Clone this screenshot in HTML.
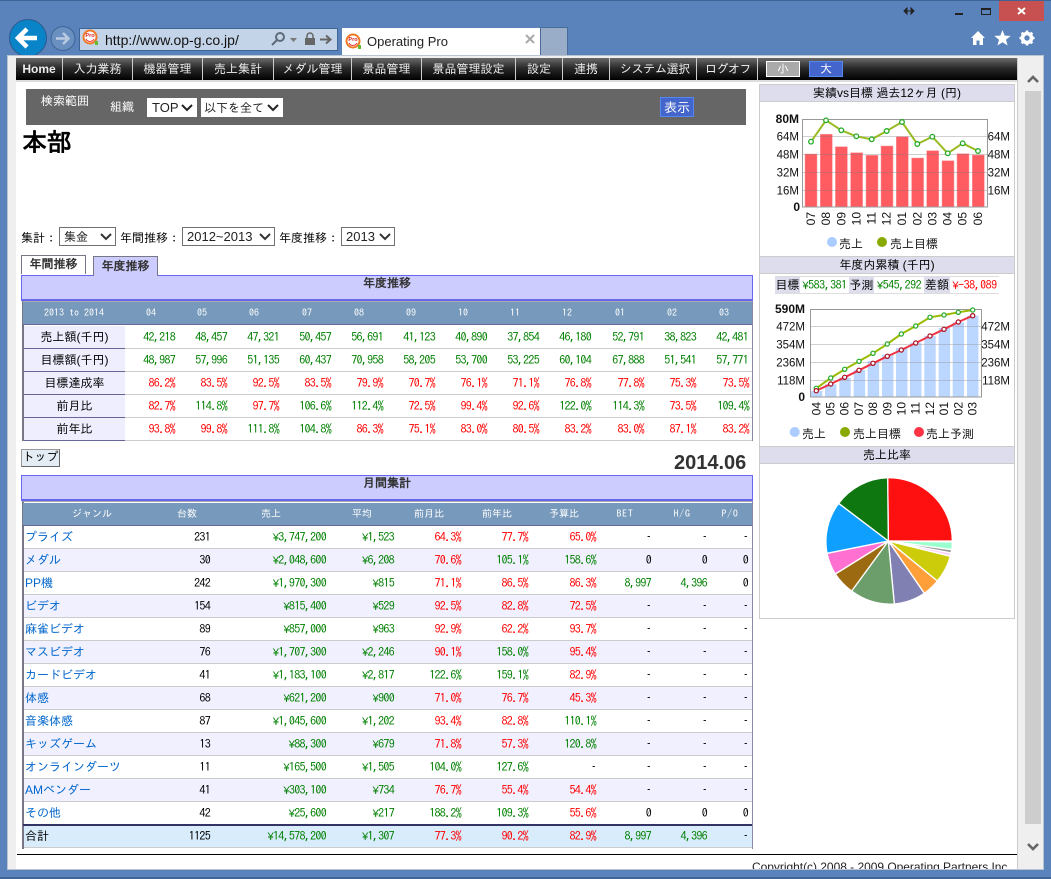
<!DOCTYPE html>
<html lang="ja"><head><meta charset="utf-8"><title>Operating Pro</title>
<style>
*{box-sizing:border-box}
html,body{margin:0;padding:0;background:#5b83bb;overflow:hidden}
#w{position:relative;width:1051px;height:879px;overflow:hidden;background:#5b83bb;font-family:"Liberation Sans","IPAGothic","Noto Sans CJK JP",sans-serif;font-size:12px;color:#000}
.a{position:absolute;white-space:nowrap}
.nav{position:absolute;top:58px;height:22px;line-height:22px;color:#eee;font-size:12px;text-align:center;border-right:1px solid #ccc}
table{position:absolute;border-collapse:separate;border-spacing:0;table-layout:fixed;font-family:"IPAGothic","Liberation Sans",sans-serif;font-size:12px}
td{height:23px;padding:0;text-align:right;border-bottom:1px solid #ccc;white-space:nowrap;overflow:visible;letter-spacing:-.7px}
td.n{font-family:"Liberation Sans","IPAGothic",sans-serif;font-size:12px;letter-spacing:0}
i{font-style:normal;font-family:"Liberation Sans",sans-serif;font-size:11px}
.t1 td.n{text-align:center;background:#eef;border-bottom-color:#669}
.t2 td.n{text-align:left;padding-left:1px;color:#06c}
.alt td{background:#f0f0ff}
.tot td{background:#d8ecfc;height:23px;border-top:0}
.g{color:#008000}.r{color:#f00}
.hd{position:absolute;background:#79b;height:23px;border-bottom:1px solid #669;font-family:"IPAGothic",sans-serif}
.hd span{position:absolute;top:6px;color:#fff;font-size:10px;transform:translateX(-50%);white-space:nowrap}
.hd span.l{letter-spacing:.7px}
.bar{position:absolute;left:21px;width:732px;height:26px;background:#ccf;border:1px solid #66e;border-bottom-width:2px;text-align:center;font-weight:bold;color:#333;font-size:12px;line-height:15px}
.sel{position:absolute;height:19px;background:#fff;border:1px solid #707070}
.sel select{appearance:none;-webkit-appearance:none;border:0;background:transparent;width:100%;height:100%;padding:0 0 0 4px;font:13px "Liberation Sans","IPAGothic",sans-serif;color:#222;outline:0}
.sel svg{position:absolute;right:3px;top:5px}
.ph{position:absolute;left:760px;width:254px;background:#dde;text-align:center;font-size:12px;line-height:17px;border-bottom:1px solid #ccc;border-top:1px solid #ccc}
.v{position:absolute;top:276px;height:18px;line-height:17px;font-size:12px;text-align:center;border-top:1px solid #ddd;border-bottom:1px solid #ddd;font-family:"IPAGothic",sans-serif;white-space:nowrap}
.v.g,.v.r{letter-spacing:-.5px}
svg text{font-family:"Liberation Sans",sans-serif}
</style></head><body><div id="w">

<!-- window chrome -->
<div class="a" style="left:0;top:0;width:1051px;height:1px;background:#3f6496"></div>
<div class="a" style="left:999px;top:1px;width:45px;height:20px;background:#c75050"></div>
<svg class="a" style="left:0;top:0" width="1051" height="60">
 <path d="M904 11h10M904 11l3-3v6zM914 11l-3-3v6z" fill="#222" stroke="#222"/>
 <rect x="955" y="13" width="8" height="2" fill="#222"/>
 <rect x="981.5" y="8.5" width="9" height="6" fill="none" stroke="#222"/><rect x="981" y="8" width="10" height="2" fill="#222"/>
 <path d="M1018 8l7 6M1025 8l-7 6" stroke="#fff" stroke-width="2"/>
 <circle cx="28" cy="38" r="18.5" fill="#0a84c8" stroke="#2d5a8e" stroke-width="1"/>
 <path d="M19 38h18M27 29l-9 9 9 9" fill="none" stroke="#fff" stroke-width="4.5"/>
 <circle cx="63" cy="38.500" r="12" fill="#6a90c2" stroke="#3f6496" stroke-width="1"/>
 <path d="M56 38.500h12M63 33l5.500 5.500-5.500 5.500" fill="none" stroke="#b9cbe2" stroke-width="2.400"/>
 <rect x="79.500" y="28.500" width="258" height="22" fill="#c4d4e8" stroke="#3f6496"/>
 <g fill="none" stroke="#5f6b7a" stroke-width="2"><circle cx="280" cy="37" r="4"/><path d="M277 40l-5 5"/></g>
 <path d="M290 38h7l-3.500 4z" fill="#777"/>
 <rect x="305" y="38" width="10" height="7" fill="#666"/><path d="M307 38v-2a3 3 0 0 1 6 0v2" fill="none" stroke="#666" stroke-width="1.500"/>
 <path d="M320 39.500h10M326 35.500l4.500 4-4.500 4" fill="none" stroke="#666" stroke-width="2"/>
 <rect x="342" y="28" width="198" height="27" fill="#fff"/>
 <rect x="540.500" y="27.500" width="27" height="28" fill="#9aadc8" stroke="#4a6c9c"/>
 <path d="M526 35l8 8M534 35l-8 8" stroke="#aaa" stroke-width="2"/>
 <g id="fav"><circle cx="90" cy="37" r="6.500" fill="#fff" stroke="#ef7a25" stroke-width="2"/><text x="90" y="37" font-size="5.500" font-weight="bold" fill="#d22" text-anchor="middle">Pro</text><path d="M86 39a4.500 4.500 0 0 0 8 0" fill="none" stroke="#e33"/><rect x="95" y="41" width="3" height="4" fill="#6b3"/></g>
 <circle cx="353" cy="41" r="6.500" fill="#fff" stroke="#ef7a25" stroke-width="2"/><text x="353" y="41" font-size="5.500" font-weight="bold" fill="#d22" text-anchor="middle">Pro</text><path d="M349 43a4.500 4.500 0 0 0 8 0" fill="none" stroke="#e33"/><rect x="358" y="45" width="3" height="4" fill="#6b3"/>
 <path d="M971 38l7-7 7 7h-2v7h-3.500v-4.500h-3v4.500h-3.500v-7z" fill="#fff"/>
 <path d="M1002.500 30l2.200 5.600 6 .3-4.700 3.800 1.600 5.800-5.100-3.300-5.100 3.300 1.600-5.800-4.700-3.800 6-.3z" fill="#fff"/>
 <g transform="translate(1027 38)"><circle r="4.800" fill="none" stroke="#fff" stroke-width="3"/><path d="M0-7.500V7.500M-7.500 0H7.500M-5.300-5.300L5.300 5.300M5.300-5.300L-5.300 5.300" stroke="#fff" stroke-width="2.600"/><circle r="2.700" fill="#5b83bb"/></g>
</svg>
<div class="a" style="left:105px;top:31px;font:14px 'Liberation Sans',sans-serif;color:#111;line-height:18px">http://www.op-g.co.jp/</div>
<div class="a" style="left:367px;top:33px;font:13px 'Liberation Sans',sans-serif;color:#222;line-height:18px">Operating Pro</div>

<!-- content frame -->
<div class="a" style="left:7px;top:55px;width:1037px;height:815px;background:#efefef;border:1px solid #b9c4d2"></div>
<div class="a" style="left:16px;top:80px;width:1001px;height:789px;background:#fff;border-top:2px solid #ddd;overflow:hidden"></div>
<div class="a" style="left:1017px;top:58px;width:1px;height:811px;background:#ccc"></div>
<div class="a" style="left:1025px;top:91px;width:16px;height:733px;background:#cdcdcd"></div>
<svg class="a" style="left:1020px;top:70px" width="26" height="790"><path d="M8 12l5-5 5 5" fill="none" stroke="#666" stroke-width="2.600"/><path d="M8 774l5 5 5-5" fill="none" stroke="#666" stroke-width="2.600"/></svg>

<!-- nav -->
<div class="a" style="left:16px;top:58px;width:1001px;height:22px;background:linear-gradient(#6a6a6a,#2a2a2a 45%,#000)"></div>
<div class="nav" style="left:16px;width:47px;font-weight:bold;font-family:'Liberation Sans',sans-serif">Home</div>
<div class="nav" style="left:63px;width:70px">入力業務</div>
<div class="nav" style="left:133px;width:70px">機器管理</div>
<div class="nav" style="left:203px;width:71px">売上集計</div>
<div class="nav" style="left:274px;width:78px">メダル管理</div>
<div class="nav" style="left:352px;width:70px">景品管理</div>
<div class="nav" style="left:422px;width:94px">景品管理設定</div>
<div class="nav" style="left:516px;width:47px">設定</div>
<div class="nav" style="left:563px;width:47px">連携</div>
<div class="nav" style="left:610px;width:87px;padding-left:4px;letter-spacing:-.3px">システム選択</div>
<div class="nav" style="left:697px;width:61px;padding-left:2px;letter-spacing:-.5px">ログオフ</div>
<div class="a" style="left:766px;top:61px;width:34px;height:16px;background:#aaa;border:1px solid #fff;color:#fff;text-align:center;line-height:14px">小</div>
<div class="a" style="left:809px;top:61px;width:34px;height:16px;background:#46c;border:1px solid #58e;color:#fff;text-align:center;line-height:14px">大</div>

<!-- search bar -->
<div class="a" style="left:26px;top:89px;width:720px;height:36px;background:#666"></div>
<div class="a" style="left:41px;top:95px;color:#fff;line-height:13px">検索範囲</div>
<div class="a" style="left:110px;top:101px;color:#fff;line-height:13px">組織</div>
<div class="sel" style="left:147px;top:98px;width:50px;border-color:#fff"><select><option>TOP</option></select><svg width="12" height="8"><path d="M1 1l5 5 5-5" fill="none" stroke="#222" stroke-width="2"/></svg></div>
<div class="sel" style="left:201px;top:98px;width:82px;border-color:#fff"><select style="padding-left:2px;font-size:12px"><option>以下を全て</option></select><svg width="12" height="8"><path d="M1 1l5 5 5-5" fill="none" stroke="#222" stroke-width="2"/></svg></div>
<div class="a" style="left:660px;top:97px;width:34px;height:20px;background:#46c;border:1px solid #58e;color:#fff;text-align:center;font-size:13px;line-height:20px">表示</div>

<div class="a" style="left:22px;top:129px;font-size:25px;font-weight:bold;line-height:28px">本部</div>

<!-- selectors -->
<div class="a" style="left:21px;top:232px;line-height:13px">集計：</div>
<div class="sel" style="left:59px;top:227px;width:57px"><select style="font-size:12px"><option>集金</option></select><svg width="12" height="8"><path d="M1 1l5 5 5-5" fill="none" stroke="#333" stroke-width="2"/></svg></div>
<div class="a" style="left:120px;top:232px;line-height:13px">年間推移：</div>
<div class="sel" style="left:182px;top:227px;width:93px"><select><option>2012~2013</option></select><svg width="12" height="8"><path d="M1 1l5 5 5-5" fill="none" stroke="#333" stroke-width="2"/></svg></div>
<div class="a" style="left:279px;top:232px;line-height:13px">年度推移：</div>
<div class="sel" style="left:341px;top:227px;width:54px"><select><option>2013</option></select><svg width="12" height="8"><path d="M1 1l5 5 5-5" fill="none" stroke="#333" stroke-width="2"/></svg></div>

<!-- tabs -->
<div class="a" style="left:21px;top:255px;width:65px;height:19px;background:#fff;border:1px solid #778;border-bottom:0;text-align:center;font-weight:bold;color:#333;line-height:17px">年間推移</div>
<div class="a" style="left:93px;top:256px;width:65px;height:20px;background:#ccf;border:1px solid #778;border-bottom:0;text-align:center;font-weight:bold;color:#333;line-height:19px;z-index:2">年度推移</div>

<!-- yearly table -->
<div class="bar" style="top:275px">年度推移</div>
<div class="a" style="left:22px;top:301px;width:731px;height:140px;border-left:2px solid #778;border-right:1px solid #88a;border-top:1px solid #aaa"></div>
<div class="hd" style="left:23px;top:302px;width:729px"><span style="left:51px">2013 to 2014</span><span style="left:128px">04</span><span style="left:179px">05</span><span style="left:231px">06</span><span style="left:284px">07</span><span style="left:336px">08</span><span style="left:388px">09</span><span style="left:440px">10</span><span style="left:492px">11</span><span style="left:544px">12</span><span style="left:597px">01</span><span style="left:649px">02</span><span style="left:701px">03</span></div>
<table class="t1" style="left:24px;top:326px;width:728px">
<colgroup><col style="width:101px"><col style="width:50px"><col style="width:52px"><col style="width:52px"><col style="width:52px"><col style="width:52px"><col style="width:52px"><col style="width:52px"><col style="width:52px"><col style="width:52px"><col style="width:53px"><col style="width:52px"><col style="width:56px"></colgroup>
<tr><td class="n">売上額(千円)</td><td class="g">42,218</td><td class="g">48,457</td><td class="g">47,321</td><td class="g">50,457</td><td class="g">56,691</td><td class="g">41,123</td><td class="g">40,890</td><td class="g">37,854</td><td class="g">46,180</td><td class="g">52,791</td><td class="g">38,823</td><td class="g" style="padding-right:4px">42,481</td></tr>
<tr><td class="n">目標額(千円)</td><td class="g">48,987</td><td class="g">57,996</td><td class="g">51,135</td><td class="g">60,437</td><td class="g">70,958</td><td class="g">58,205</td><td class="g">53,700</td><td class="g">53,225</td><td class="g">60,104</td><td class="g">67,888</td><td class="g">51,541</td><td class="g" style="padding-right:4px">57,771</td></tr>
<tr><td class="n">目標達成率</td><td class="r">86.2%</td><td class="r">83.5%</td><td class="r">92.5%</td><td class="r">83.5%</td><td class="r">79.9%</td><td class="r">70.7%</td><td class="r">76.1%</td><td class="r">71.1%</td><td class="r">76.8%</td><td class="r">77.8%</td><td class="r">75.3%</td><td class="r" style="padding-right:3px">73.5%</td></tr>
<tr><td class="n">前月比</td><td class="r">82.7%</td><td class="g">114.8%</td><td class="r">97.7%</td><td class="g">106.6%</td><td class="g">112.4%</td><td class="r">72.5%</td><td class="r">99.4%</td><td class="r">92.6%</td><td class="g">122.0%</td><td class="g">114.3%</td><td class="r">73.5%</td><td class="g" style="padding-right:3px">109.4%</td></tr>
<tr><td class="n">前年比</td><td class="r">93.8%</td><td class="r">99.8%</td><td class="g">111.8%</td><td class="g">104.8%</td><td class="r">86.3%</td><td class="r">75.1%</td><td class="r">83.0%</td><td class="r">80.5%</td><td class="r">83.2%</td><td class="r">83.0%</td><td class="r">87.1%</td><td class="r" style="padding-right:3px">83.2%</td></tr>
</table>

<div class="a" style="left:21px;top:449px;width:39px;height:18px;background:#e4ecf4;border:1px solid #999;text-align:center;line-height:15px;font-size:12px;border-right-color:#666;border-bottom-color:#666">トップ</div>
<div class="a" style="left:674px;top:451px;font:bold 20px/24px 'Liberation Sans',sans-serif;color:#333">2014.06</div>

<!-- monthly table -->
<div class="bar" style="top:475px">月間集計</div>
<div class="a" style="left:22px;top:501px;width:731px;height:348px;border-left:2px solid #778;border-right:1px solid #88a;border-top:1px solid #aaa"></div>
<div class="hd" style="left:23px;top:503px;width:729px"><span style="left:69px">ジャンル</span><span style="left:164px">台数</span><span style="left:248px">売上</span><span style="left:339px">平均</span><span style="left:406px">前月比</span><span style="left:474px">前年比</span><span style="left:541px">予算比</span><span class="l" style="left:602px">BET</span><span class="l" style="left:659px">H/G</span><span class="l" style="left:707px">P/O</span></div>
<table class="t2" style="left:24px;top:526px;width:728px">
<colgroup><col style="width:126px"><col style="width:60px"><col style="width:116px"><col style="width:68px"><col style="width:67px"><col style="width:67px"><col style="width:68px"><col style="width:55px"><col style="width:56px"><col style="width:45px"></colgroup>
<tr><td class="n">プライズ</td><td>231</td><td class="g"><i>¥</i>3,747,200</td><td class="g"><i>¥</i>1,523</td><td class="r">64.3%</td><td class="r">77.7%</td><td class="r">65.0%</td><td>–</td><td>–</td><td style="padding-right:4px">–</td></tr>
<tr class="alt"><td class="n">メダル</td><td>30</td><td class="g"><i>¥</i>2,048,600</td><td class="g"><i>¥</i>6,208</td><td class="r">70.6%</td><td class="g">105.1%</td><td class="g">158.6%</td><td>0</td><td>0</td><td style="padding-right:4px">0</td></tr>
<tr><td class="n">PP機</td><td>242</td><td class="g"><i>¥</i>1,970,300</td><td class="g"><i>¥</i>815</td><td class="r">71.1%</td><td class="r">86.5%</td><td class="r">86.3%</td><td class="g">8,997</td><td class="g">4,396</td><td style="padding-right:4px">0</td></tr>
<tr class="alt"><td class="n">ビデオ</td><td>154</td><td class="g"><i>¥</i>815,400</td><td class="g"><i>¥</i>529</td><td class="r">92.5%</td><td class="r">82.8%</td><td class="r">72.5%</td><td>–</td><td>–</td><td style="padding-right:4px">–</td></tr>
<tr><td class="n">麻雀ビデオ</td><td>89</td><td class="g"><i>¥</i>857,000</td><td class="g"><i>¥</i>963</td><td class="r">92.9%</td><td class="r">62.2%</td><td class="r">93.7%</td><td>–</td><td>–</td><td style="padding-right:4px">–</td></tr>
<tr class="alt"><td class="n">マスビデオ</td><td>76</td><td class="g"><i>¥</i>1,707,300</td><td class="g"><i>¥</i>2,246</td><td class="r">90.1%</td><td class="g">158.0%</td><td class="r">95.4%</td><td>–</td><td>–</td><td style="padding-right:4px">–</td></tr>
<tr><td class="n">カードビデオ</td><td>41</td><td class="g"><i>¥</i>1,183,100</td><td class="g"><i>¥</i>2,817</td><td class="g">122.6%</td><td class="g">159.1%</td><td class="r">82.9%</td><td>–</td><td>–</td><td style="padding-right:4px">–</td></tr>
<tr class="alt"><td class="n">体感</td><td>68</td><td class="g"><i>¥</i>621,200</td><td class="g"><i>¥</i>900</td><td class="r">71.0%</td><td class="r">76.7%</td><td class="r">45.3%</td><td>–</td><td>–</td><td style="padding-right:4px">–</td></tr>
<tr><td class="n">音楽体感</td><td>87</td><td class="g"><i>¥</i>1,045,600</td><td class="g"><i>¥</i>1,202</td><td class="r">93.4%</td><td class="r">82.8%</td><td class="g">110.1%</td><td>–</td><td>–</td><td style="padding-right:4px">–</td></tr>
<tr class="alt"><td class="n">キッズゲーム</td><td>13</td><td class="g"><i>¥</i>88,300</td><td class="g"><i>¥</i>679</td><td class="r">71.8%</td><td class="r">57.3%</td><td class="g">120.8%</td><td>–</td><td>–</td><td style="padding-right:4px">–</td></tr>
<tr><td class="n">オンラインダーツ</td><td>11</td><td class="g"><i>¥</i>165,500</td><td class="g"><i>¥</i>1,505</td><td class="g">104.0%</td><td class="g">127.6%</td><td>–</td><td>–</td><td>–</td><td style="padding-right:4px">–</td></tr>
<tr class="alt"><td class="n">AMベンダー</td><td>41</td><td class="g"><i>¥</i>303,100</td><td class="g"><i>¥</i>734</td><td class="r">76.7%</td><td class="r">55.4%</td><td class="r">54.4%</td><td>–</td><td>–</td><td style="padding-right:4px">–</td></tr>
<tr><td class="n">その他</td><td>42</td><td class="g"><i>¥</i>25,600</td><td class="g"><i>¥</i>217</td><td class="g">188.2%</td><td class="g">109.3%</td><td class="r">55.6%</td><td>0</td><td>0</td><td style="padding-right:4px">0</td></tr>
<tr class="tot"><td class="n" style="color:#000;background:#d8ecfc">合計</td><td>1125</td><td class="g"><i>¥</i>14,578,200</td><td class="g"><i>¥</i>1,307</td><td class="r">77.3%</td><td class="r">90.2%</td><td class="r">82.9%</td><td class="g">8,997</td><td class="g">4,396</td><td style="padding-right:4px">–</td></tr>
</table>
<div class="a" style="left:23px;top:824px;width:729px;height:2px;background:#336"></div>

<!-- footer -->
<div class="a" style="left:17px;top:854px;width:1000px;height:1px;background:#000"></div>
<div class="a" style="left:752px;top:860px;width:262px;height:9px;overflow:hidden;font:12px/15px 'Liberation Sans',sans-serif;letter-spacing:-.03px;color:#222">Copyright(c) 2008 - 2009 Operating Partners Inc.</div>

<!-- right panel -->
<div class="a" style="left:759px;top:84px;width:256px;height:535px;background:#fff;border:1px solid #ccc"></div>
<div class="ph" style="top:84px;height:18px">実績vs目標 過去12ヶ月 (円)</div>
<div class="ph" style="top:256px;height:18px">年度内累積 (千円)</div>
<div class="ph" style="top:446px;height:18px">売上比率</div>

<div class="v" style="left:775px;width:25px;background:#dde">目標</div>
<div class="v g" style="left:800px;width:49px"><i>¥</i>583,381</div>
<div class="v" style="left:849px;width:25px;background:#dde">予測</div>
<div class="v g" style="left:874px;width:50px"><i>¥</i>545,292</div>
<div class="v" style="left:924px;width:26px;background:#dde">差額</div>
<div class="v r" style="left:950px;width:49px"><i>¥</i>-38,089</div>

<svg class="a" style="left:0;top:0" width="1051" height="879">
 <!-- chart 1 -->
 <g fill="#ff4a50" fill-opacity=".9" stroke="#ff9a9e" stroke-width=".5">
  <rect x="805" y="154" width="12" height="53"/><rect x="820.300" y="134.300" width="12" height="72.700"/><rect x="835.400" y="146.700" width="12" height="60.300"/><rect x="850.600" y="152.700" width="12" height="54.300"/><rect x="866" y="155.300" width="12" height="51.700"/><rect x="881" y="146" width="12" height="61"/><rect x="896.300" y="136.700" width="12" height="70.300"/><rect x="911.600" y="158" width="12" height="49"/><rect x="926.700" y="150.700" width="12" height="56.300"/><rect x="942" y="160.700" width="12" height="46.300"/><rect x="957" y="153.700" width="12" height="53.300"/><rect x="972.300" y="155" width="12" height="52"/>
 </g>
 <path d="M803 136.500H987M803 154.500H987M803 172.500H987M803 190.500H987" stroke="#777" stroke-opacity=".35"/>
 <rect x="802.500" y="119.500" width="185" height="87.500" fill="none" stroke="#999"/>
 <polyline points="811,141.700 826,120.300 841.300,130.300 856.300,136.300 871.700,139.300 886.700,131 902,122 917.300,144 932.300,136.700 947.700,153.300 962.700,143.300 978,151" fill="none" stroke="#99bb22" stroke-width="2"/>
 <g fill="#fff" stroke="#22aa22" stroke-width="1.300">
  <circle cx="811" cy="141.700" r="2.300"/><circle cx="826" cy="120.300" r="2.300"/><circle cx="841.300" cy="130.300" r="2.300"/><circle cx="856.300" cy="136.300" r="2.300"/><circle cx="871.700" cy="139.300" r="2.300"/><circle cx="886.700" cy="131" r="2.300"/><circle cx="902" cy="122" r="2.300"/><circle cx="917.300" cy="144" r="2.300"/><circle cx="932.300" cy="136.700" r="2.300"/><circle cx="947.700" cy="153.300" r="2.300"/><circle cx="962.700" cy="143.300" r="2.300"/><circle cx="978" cy="151" r="2.300"/>
 </g>
 <g font-size="11.500" fill="#111" text-anchor="end">
  <text x="799" y="123" font-weight="bold" font-size="12">80M</text><text x="799" y="140.500">64M</text><text x="799" y="158.500">48M</text><text x="799" y="176.500">32M</text><text x="799" y="194.500">16M</text><text x="800" y="211" font-weight="bold" font-size="12">0</text>
 </g>
 <g font-size="11.500" fill="#111" text-anchor="end"><text x="1010" y="140.500">64M</text><text x="1010" y="158.500">48M</text><text x="1010" y="176.500">32M</text><text x="1010" y="194.500">16M</text></g>
 <g font-size="12" fill="#111" text-anchor="end">
  <text transform="translate(815,212) rotate(-90)">07</text><text transform="translate(830,212) rotate(-90)">08</text><text transform="translate(845.300,212) rotate(-90)">09</text><text transform="translate(860.300,212) rotate(-90)">10</text><text transform="translate(875.700,212) rotate(-90)">11</text><text transform="translate(890.700,212) rotate(-90)">12</text><text transform="translate(906,212) rotate(-90)">01</text><text transform="translate(921.300,212) rotate(-90)">02</text><text transform="translate(936.300,212) rotate(-90)">03</text><text transform="translate(951.700,212) rotate(-90)">04</text><text transform="translate(966.700,212) rotate(-90)">05</text><text transform="translate(982,212) rotate(-90)">06</text>
 </g>
 <circle cx="832" cy="242" r="5" fill="#aaccff"/><circle cx="882" cy="242" r="5" fill="#88aa00"/>
 <text x="839" y="248" font-size="12" fill="#111" style="font-family:IPAGothic,sans-serif">売上</text>
 <text x="890" y="248" font-size="12" fill="#111" style="font-family:IPAGothic,sans-serif">売上目標</text>

 <!-- chart 2 -->
 <g fill="#bbd6ff">
  <rect x="811" y="391" width="11.400" height="6"/><rect x="825" y="384.300" width="11.400" height="12.700"/><rect x="839.300" y="377.700" width="11.400" height="19.300"/><rect x="853.700" y="370" width="11.400" height="27"/><rect x="867.700" y="361" width="11.400" height="36"/><rect x="882" y="354.700" width="11.400" height="42.300"/><rect x="896" y="348" width="11.400" height="49"/><rect x="910" y="342.700" width="11.400" height="54.300"/><rect x="924.300" y="336" width="11.400" height="61"/><rect x="938.700" y="328" width="11.400" height="69"/><rect x="952.700" y="322.300" width="11.400" height="74.700"/><rect x="967" y="315.700" width="11.400" height="81.300"/>
 </g>
 <path d="M810 326.500H982M810 344.500H982M810 362.500H982M810 380.500H982" stroke="#999" stroke-opacity=".45"/>
 <rect x="810.500" y="309.500" width="171" height="87.500" fill="none" stroke="#999"/>
 <polyline points="816.300,388.300 830.700,378 844.700,369.300 859,361.300 873,353.300 887.300,344 901.300,334 915.700,326 930,317.300 944,315 958.300,312.300 972.700,310" fill="none" stroke="#99bb00" stroke-width="2"/>
 <polyline points="816.300,390.700 830.700,384 844.700,377.300 859,370.300 873,363.300 887.300,356.300 901.300,350 915.700,343 930,336 944,329.300 958.300,322 972.700,315.700" fill="none" stroke="#ee3344" stroke-width="2"/>
 <g fill="#fff" stroke="#22aa22" stroke-width="1.200">
  <circle cx="816.300" cy="388.300" r="2.100"/><circle cx="830.700" cy="378" r="2.100"/><circle cx="844.700" cy="369.300" r="2.100"/><circle cx="859" cy="361.300" r="2.100"/><circle cx="873" cy="353.300" r="2.100"/><circle cx="887.300" cy="344" r="2.100"/><circle cx="901.300" cy="334" r="2.100"/><circle cx="915.700" cy="326" r="2.100"/><circle cx="930" cy="317.300" r="2.100"/><circle cx="944" cy="315" r="2.100"/><circle cx="958.300" cy="312.300" r="2.100"/><circle cx="972.700" cy="310" r="2.100"/>
 </g>
 <g fill="#fff" stroke="#aa1122" stroke-width="1.200">
  <circle cx="816.300" cy="390.700" r="2.100"/><circle cx="830.700" cy="384" r="2.100"/><circle cx="844.700" cy="377.300" r="2.100"/><circle cx="859" cy="370.300" r="2.100"/><circle cx="873" cy="363.300" r="2.100"/><circle cx="887.300" cy="356.300" r="2.100"/><circle cx="901.300" cy="350" r="2.100"/><circle cx="915.700" cy="343" r="2.100"/><circle cx="930" cy="336" r="2.100"/><circle cx="944" cy="329.300" r="2.100"/><circle cx="958.300" cy="322" r="2.100"/><circle cx="972.700" cy="315.700" r="2.100"/>
 </g>
 <g font-size="11.500" fill="#111" text-anchor="end">
  <text x="805" y="313" font-weight="bold" font-size="12">590M</text><text x="805" y="330.500">472M</text><text x="805" y="348.500">354M</text><text x="805" y="366.500">236M</text><text x="805" y="384.500">118M</text><text x="805" y="401" font-weight="bold" font-size="12">0</text>
 </g>
 <g font-size="11.500" fill="#111" text-anchor="end"><text x="1010" y="330.500">472M</text><text x="1010" y="348.500">354M</text><text x="1010" y="366.500">236M</text><text x="1010" y="384.500">118M</text></g>
 <g font-size="12" fill="#111" text-anchor="end">
  <text transform="translate(820.300,402) rotate(-90)">04</text><text transform="translate(834.700,402) rotate(-90)">05</text><text transform="translate(848.700,402) rotate(-90)">06</text><text transform="translate(863,402) rotate(-90)">07</text><text transform="translate(877,402) rotate(-90)">08</text><text transform="translate(891.300,402) rotate(-90)">09</text><text transform="translate(905.300,402) rotate(-90)">10</text><text transform="translate(919.700,402) rotate(-90)">11</text><text transform="translate(934,402) rotate(-90)">12</text><text transform="translate(948,402) rotate(-90)">01</text><text transform="translate(962.300,402) rotate(-90)">02</text><text transform="translate(976.700,402) rotate(-90)">03</text>
 </g>
 <circle cx="794.700" cy="432" r="5" fill="#aaccff"/><circle cx="845" cy="432" r="5" fill="#88aa00"/><circle cx="919" cy="432" r="5" fill="#ff3344"/>
 <text x="802" y="438" font-size="12" fill="#111" style="font-family:IPAGothic,sans-serif">売上</text>
 <text x="853" y="438" font-size="12" fill="#111" style="font-family:IPAGothic,sans-serif">売上目標</text>
 <text x="926" y="438" font-size="12" fill="#111" style="font-family:IPAGothic,sans-serif">売上予測</text>

 <!-- pie -->
 <g transform="translate(755 445) scale(.33333)" stroke="#fff" stroke-width="4">
  <path d="M400 288L398 98A190 190 0 0 1 592 288Z" fill="#ff1010"/>
  <path d="M400 288L592 291A190 190 0 0 1 590 314Z" fill="#99ffcc"/>
  <path d="M400 288L590 314A190 190 0 0 1 588 324Z" fill="#999"/>
  <path d="M400 288L588 324A190 190 0 0 1 586 333Z" fill="#ffccff"/>
  <path d="M400 288L586 334A190 190 0 0 1 547 408Z" fill="#cccc0a"/>
  <path d="M400 288L547 408A190 190 0 0 1 508 445Z" fill="#ff9f3a"/>
  <path d="M400 288L508 445A190 190 0 0 1 418 477Z" fill="#8080b3"/>
  <path d="M400 288L418 477A190 190 0 0 1 290 438Z" fill="#6b9e6b"/>
  <path d="M400 288L290 438A190 190 0 0 1 241 387Z" fill="#9c6a10"/>
  <path d="M400 288L241 387A190 190 0 0 1 216 325Z" fill="#ff70d0"/>
  <path d="M400 288L216 325A190 190 0 0 1 251 175Z" fill="#0fa0ff"/>
  <path d="M400 288L251 175A190 190 0 0 1 398 98Z" fill="#0f770f"/>
 </g>
</svg>

<!-- bottom edge -->
<div class="a" style="left:0;top:877px;width:1051px;height:2px;background:#3f6496"></div>
</div></body></html>
